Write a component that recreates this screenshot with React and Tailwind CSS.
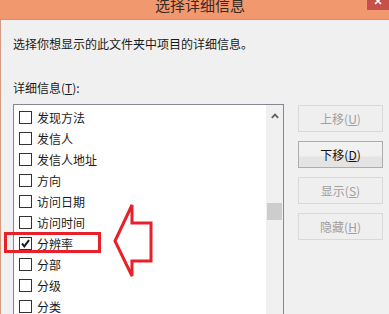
import React from "react";

const items = ["发现方法", "发信人", "发信人地址", "方向", "访问日期", "访问时间", "分辨率", "分部", "分级", "分类"];

function Box({ checked }) {
  return (
    <div className="w-[13px] h-[13px] border border-[#333333] bg-white shrink-0 flex items-center justify-center">
      {checked && (
        <svg width="11" height="11" viewBox="0 0 11 11">
          <path d="M2 5.5 L4.3 8.3 L9 2.2" fill="none" stroke="#1a1a1a" strokeWidth="2" />
        </svg>
      )}
    </div>
  );
}

function Btn({ label, k, disabled, primary }) {
  return (
    <div
      className={
        "w-[85px] h-[27px] flex items-center justify-center text-[12px] border " +
        (disabled
          ? "border-[#d9d9d9] bg-[#efefef] text-[#a0a0a0]"
          : "border-[#adadad] bg-[linear-gradient(#f2f2f2_0%,#f0f0f0_55%,#e4e4e4_60%,#e4e4e4_100%)] text-[#111111]")
      }
    >
      <span>
        {label}(<span className="underline">{k}</span>)
      </span>
    </div>
  );
}

export default function App() {
  return (
    <div
      className="relative w-[389px] h-[314px] overflow-hidden bg-[#f0f0f0] flex flex-col"
      style={{ fontFamily: '"Noto Sans CJK SC", "Noto Sans", sans-serif' }}
    >
      <div className="h-[20px] shrink-0 bg-[#f2986f] border-b border-[#e08c68] flex overflow-hidden">
        <div className="pl-[155px] mt-[-3px] text-[15px] leading-[15px] text-[#3a2a22]">选择详细信息</div>
        <div className="ml-auto w-[22px] h-[10px] bg-[#c7504a] flex justify-center overflow-hidden">
          <svg width="10" height="10" viewBox="0 0 10 10" className="mt-[-4px]">
            <path d="M2 2 L8 8 M8 2 L2 8" stroke="#ffffff" strokeWidth="1.6" />
          </svg>
        </div>
      </div>
      <div className="flex-1 border-l border-[#d49b80] pl-[12px] flex flex-col text-[12px] text-[#1a1a1a]">
        <div className="mt-[16px] leading-[16px]">选择你想显示的此文件夹中项目的详细信息。</div>
        <div className="mt-[28px] leading-[16px]">
          详细信息(<span className="underline">T</span>):
        </div>
        <div className="mt-[8px] flex items-start">
          <div className="w-[271px] h-[220px] border border-[#828790] bg-white flex">
            <div className="flex-1 pt-[2px] pl-[5px] flex flex-col">
              {items.map((t, i) => (
                <div key={t} className="h-[21px] flex items-center gap-[5px] shrink-0">
                  <Box checked={i === 6} />
                  <span className="text-[12px] leading-[14px] text-[#1a1a1a]">{t}</span>
                </div>
              ))}
            </div>
            <div className="w-[17px] bg-[#f0f0f0] flex flex-col items-center">
              <svg width="8" height="6" viewBox="0 0 8 6" className="mt-[8px]">
                <path d="M0.8 4.8 L4 1.6 L7.2 4.8" fill="none" stroke="#606060" strokeWidth="1.8" />
              </svg>
              <div className="mt-[84px] w-[15px] h-[17px] bg-[#cdcdcd]" />
            </div>
          </div>
          <div className="ml-[14px] mt-[1px] flex flex-col gap-[9px]">
            <Btn label="上移" k="U" disabled />
            <Btn label="下移" k="D" />
            <Btn label="显示" k="S" disabled />
            <Btn label="隐藏" k="H" disabled />
          </div>
        </div>
      </div>
      <div className="absolute left-[4px] top-[232px] w-[97px] h-[21px] border-[3px] border-[#e8202a]" />
      <svg className="absolute left-0 top-0" width="389" height="314">
        <polygon
          points="115,241 132,205 132,223 151,223 151,261 132,261 132,276"
          fill="none"
          stroke="#e8202a"
          strokeWidth="3"
          strokeLinejoin="miter"
        />
      </svg>
    </div>
  );
}
